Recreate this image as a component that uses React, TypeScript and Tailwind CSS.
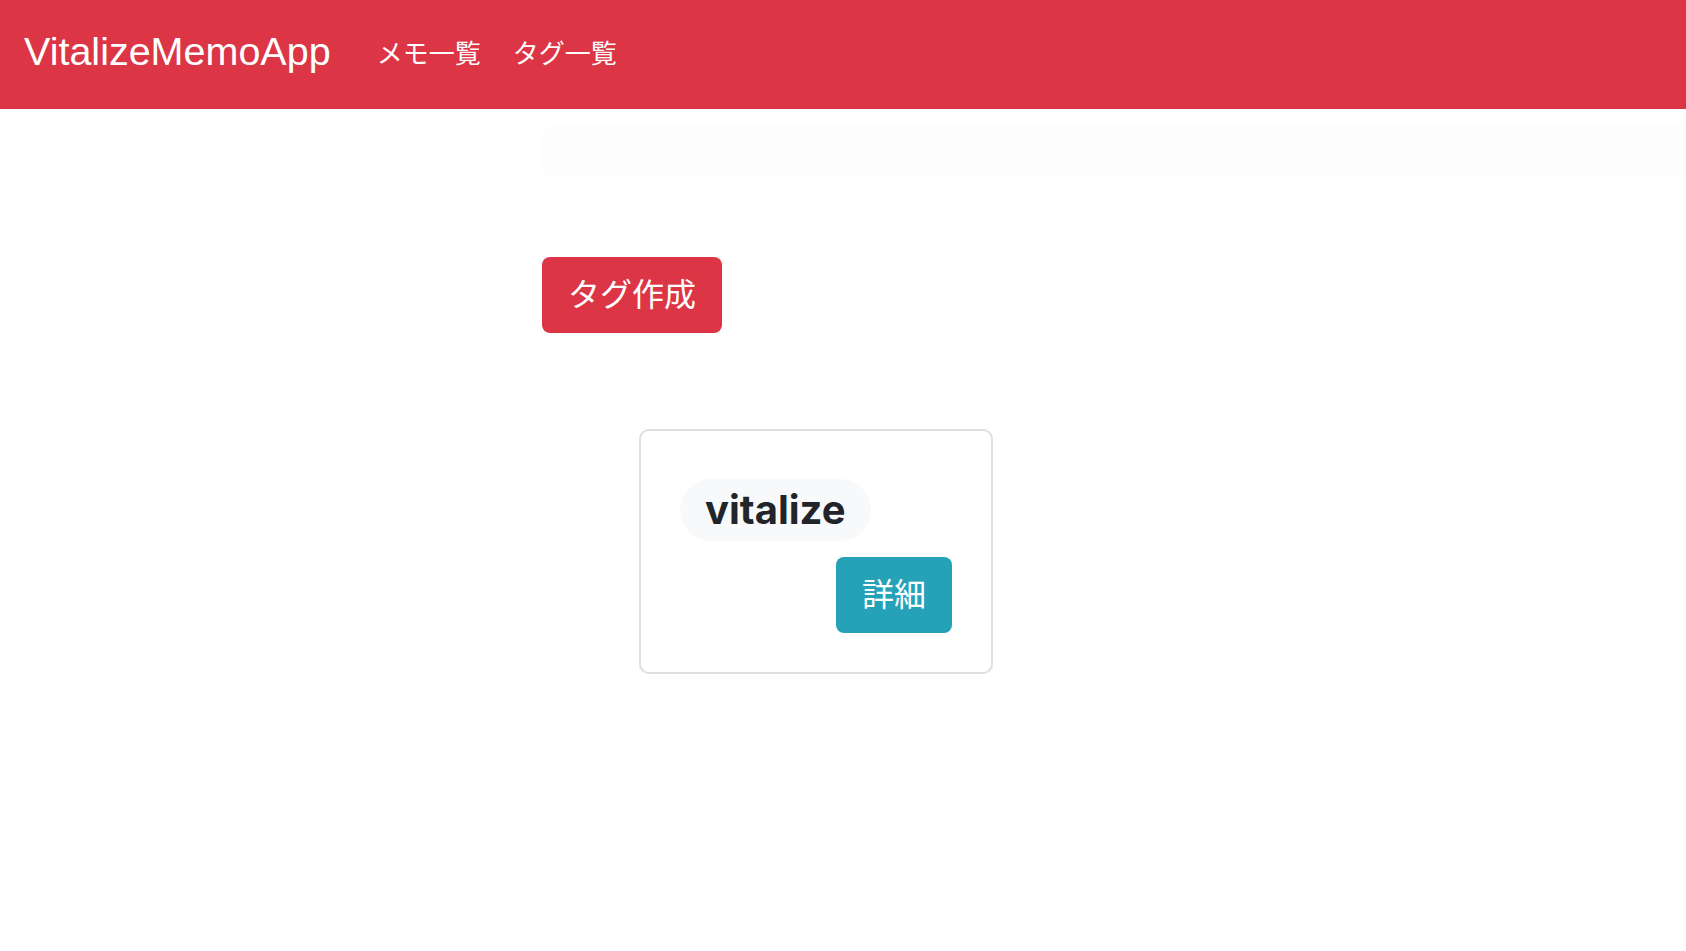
const jp = { fontFamily: '"Noto Sans CJK JP", "Noto Sans", sans-serif' };

export default function App() {
  return (
    <div className="min-h-screen bg-white">
      {/* navbar */}
      <header className="flex h-[109px] items-center bg-[#dc3545] pb-[6px] pl-[24px]">
        <a className="font-['Liberation_Sans',Arial,sans-serif] text-[39.5px] leading-none text-white">
          VitalizeMemoApp
        </a>
        <nav className="ml-[30px] flex" style={jp}>
          <a className="px-[16px] text-[26px] leading-none text-white">メモ一覧</a>
          <a className="px-[16px] text-[26px] leading-none text-white">タグ一覧</a>
        </nav>
      </header>

      <main>
        <div className="ml-[542px] mt-[17px] h-[50px] rounded-l-lg bg-[#fdfdfd]" />

        <div className="ml-[542px] mt-[81px]">
          <button
            className="flex h-[76px] w-[180px] items-center justify-center rounded-[8px] bg-[#dc3545] pb-[6px] text-[32px] text-white"
            style={jp}
          >
            タグ作成
          </button>
        </div>

        <div className="ml-[639px] mt-[96px] h-[245px] w-[354px] rounded-[10px] border-2 border-[#dfdfdf] px-[39px] pt-[48px]">
          <span className="inline-flex h-[62px] items-center rounded-full bg-[#f8f9fa] px-[25px] font-['Inter',sans-serif] text-[40px] font-bold leading-none text-[#212529]">
            vitalize
          </span>
          <div className="mt-[16px] flex justify-end">
            <button
              className="flex h-[76px] w-[116px] items-center justify-center rounded-[8px] bg-[#25a2b8] pb-[6px] text-[32px] text-white"
              style={jp}
            >
              詳細
            </button>
          </div>
        </div>
      </main>
    </div>
  );
}
